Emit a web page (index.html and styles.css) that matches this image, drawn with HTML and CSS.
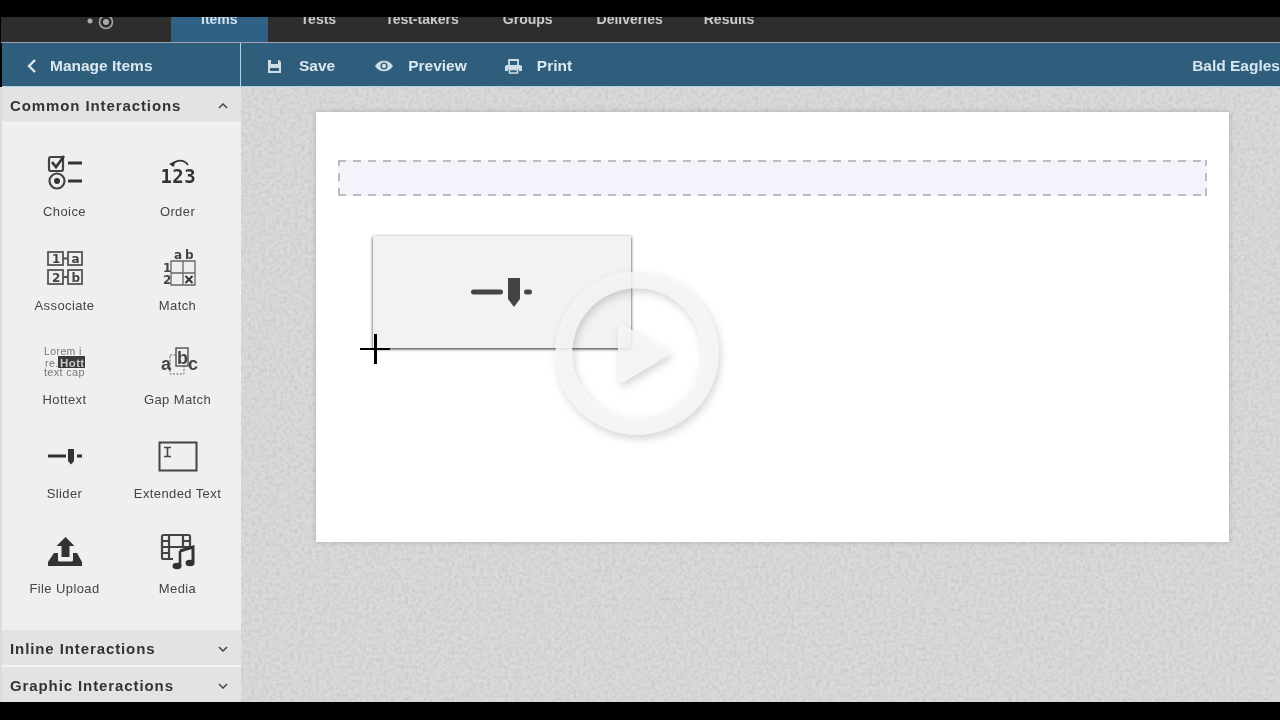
FILE: index.html
```html
<!DOCTYPE html>
<html lang="en">
<head>
    <meta charset="UTF-8">
    <title>Item authoring</title>
    <link rel="stylesheet" href="styles.css">
</head>
<body>
    <div class="screen">
        <nav class="nav">
            <div class="logo">
                <svg width="30" height="20" viewBox="0 0 30 20"><circle cx="5" cy="4" r="2.5" fill="#aaa"/><circle cx="21" cy="5" r="6.5" fill="none" stroke="#aaa" stroke-width="1.6"/><circle cx="21" cy="5" r="3" fill="#aaa"/></svg>
            </div>
            <a class="nav-item active">Items</a>
            <a class="nav-item tests">Tests</a>
            <a class="nav-item">Test-takers</a>
            <a class="nav-item">Groups</a>
            <a class="nav-item">Deliveries</a>
            <a class="nav-item results">Results</a>
        </nav>

        <header class="toolbar">
            <div class="back">
                <svg width="12" height="16" viewBox="0 0 12 16"><path d="M9 2 3 8l6 6" fill="none" stroke="#dbe8f0" stroke-width="2.4"/></svg>
                <span>Manage Items</span>
            </div>
            <div class="tool save">
                <svg width="15" height="15" viewBox="0 0 15 15"><path d="M1 1h11l2 2v11H1z" fill="#cfdde6"/><path d="M4 1h7v4H4zM3 9h9v3H3z" fill="#2f5f7f"/></svg>
                <span>Save</span>
            </div>
            <div class="tool preview">
                <svg width="18" height="12" viewBox="0 0 18 12"><path d="M0 6c4-7 14-7 18 0-4 7-14 7-18 0z" fill="#cfdde6"/><circle cx="9" cy="6" r="3.6" fill="#2f5f7f"/><circle cx="9" cy="6" r="2.2" fill="#cfdde6"/></svg>
                <span>Preview</span>
            </div>
            <div class="tool print">
                <svg width="17" height="15" viewBox="0 0 17 15"><path d="M4 6V1h9v5" fill="none" stroke="#cfdde6" stroke-width="1.8"/><path d="M2 6h13a2 2 0 0 1 2 2v4h-3v-2H3v2H0V8a2 2 0 0 1 2-2z" fill="#cfdde6"/><path d="M4.5 10.5h8V14h-8z" fill="none" stroke="#cfdde6" stroke-width="1.6"/></svg>
                <span>Print</span>
            </div>
            <div class="team">Bald Eagles</div>
        </header>

        <div class="main">
            <aside class="sidebar">
                <div class="acc-head">
                    <span>Common Interactions</span>
                    <svg class="chev" width="10" height="6" viewBox="0 0 10 6"><path d="M1 5l4-4 4 4" fill="none" stroke="#444" stroke-width="1.5"/></svg>
                </div>
                <div class="tiles">
                    <div class="tile">
                        <svg width="40" height="40" viewBox="0 0 40 40">
                            <rect x="4" y="3" width="14" height="14" rx="2" fill="none" stroke="#444" stroke-width="2.2"/>
                            <path d="M7 8l4 5 8-11" fill="none" stroke="#333" stroke-width="2.6"/>
                            <path d="M23 9h14M23 27h14" stroke="#333" stroke-width="3"/>
                            <circle cx="12" cy="27" r="7.5" fill="none" stroke="#444" stroke-width="2.2"/>
                            <circle cx="12" cy="27" r="3" fill="#333"/>
                        </svg>
                        <span>Choice</span>
                    </div>
                    <div class="tile">
                        <svg width="40" height="40" viewBox="0 0 40 40">
                            <path d="M14 12c3-7 12-7 16-1" fill="none" stroke="#333" stroke-width="1.6"/>
                            <path d="M11 10l6-3-1 6z" fill="#333"/>
                            <text x="2.500" y="28.500" class="ico-num">123</text>
                        </svg>
                        <span>Order</span>
                    </div>
                    <div class="tile">
                        <svg width="40" height="40" viewBox="0 0 40 40">
                            <g fill="none" stroke="#555" stroke-width="1.800">
                                <rect x="3" y="4" width="15" height="13"/>
                                <rect x="23" y="4" width="14" height="13"/>
                                <rect x="3" y="22" width="15" height="14"/>
                                <rect x="23" y="22" width="14" height="14"/>
                                <path d="M18 10.500h5M18 29h5"/>
                            </g>
                            <text x="7" y="15" class="ico-sm">1</text>
                            <text x="26.500" y="14.500" class="ico-sm">a</text>
                            <text x="7" y="33.500" class="ico-sm">2</text>
                            <text x="26.500" y="33.500" class="ico-sm">b</text>
                        </svg>
                        <span>Associate</span>
                    </div>
                    <div class="tile">
                        <svg width="40" height="40" viewBox="0 0 40 40">
                            <path d="M13 13h24v24H13zM25 13v24M13 25h24" fill="none" stroke="#666" stroke-width="1.300"/>
                            <text x="16" y="11" class="ico-sm">a</text>
                            <text x="27" y="11" class="ico-sm">b</text>
                            <text x="5" y="23.500" class="ico-sm">1</text>
                            <text x="5" y="36" class="ico-sm">2</text>
                            <path d="M27.500 28l7 7m0-7-7 7" stroke="#333" stroke-width="2"/>
                        </svg>
                        <span>Match</span>
                    </div>
                    <div class="tile">
                        <svg width="40" height="40" viewBox="0 0 40 40">
                            <text x="-1" y="12" class="ico-lorem">Lorem i</text>
                            <text x="0" y="24" class="ico-lorem">re.</text>
                            <rect x="13" y="13" width="27" height="12" fill="#3a3a3a"/>
                            <text x="15" y="23.500" class="ico-hot">Hott</text>
                            <text x="-1" y="32.500" class="ico-lorem wide">text cap</text>
                        </svg>
                        <span>Hottext</span>
                    </div>
                    <div class="tile">
                        <svg width="40" height="40" viewBox="0 0 40 40">
                            <rect x="12" y="12" width="14" height="19" fill="none" stroke="#666" stroke-width="1" stroke-dasharray="2 1.500"/>
                            <rect x="18" y="5" width="12" height="18" fill="#efefef" stroke="#444" stroke-width="1.300"/>
                            <text x="3" y="27" class="ico-gap">a</text>
                            <text x="19" y="20.500" class="ico-gap">b</text>
                            <text x="30" y="27" class="ico-gap">c</text>
                        </svg>
                        <span>Gap Match</span>
                    </div>
                    <div class="tile">
                        <svg width="40" height="40" viewBox="0 0 40 40">
                            <path d="M3 19h18M32 19h5" stroke="#333" stroke-width="3"/>
                            <path d="M23 12h6v12l-3 3.500-3-3.500z" fill="#333"/>
                        </svg>
                        <span>Slider</span>
                    </div>
                    <div class="tile">
                        <svg width="40" height="40" viewBox="0 0 40 40">
                            <rect x="1.500" y="5.500" width="37" height="28" fill="none" stroke="#444" stroke-width="2"/>
                            <path d="M6 10.500h7M6 19.500h7M9.500 10.500v9" fill="none" stroke="#444" stroke-width="1.600"/>
                        </svg>
                        <span>Extended Text</span>
                    </div>
                    <div class="tile">
                        <svg width="40" height="40" viewBox="0 0 40 40">
                            <path d="M20.500 6l9 9h-5v11h-8V15h-5z" fill="#333"/>
                            <path d="M9 22h4v7a1.500 1.500 0 0 0 1.500 1.500h12A1.500 1.500 0 0 0 28 29v-7h4l5 9v4H3v-4z" fill="#333"/>
                        </svg>
                        <span>File Upload</span>
                    </div>
                    <div class="tile">
                        <svg width="40" height="40" viewBox="0 0 40 40">
                            <rect x="4" y="4" width="28" height="24" rx="1.500" fill="none" stroke="#444" stroke-width="2.200"/>
                            <path d="M11 4v24M25 4v12M4 10h7M4 16h28M4 22h7M25 10h7" stroke="#444" stroke-width="2.200"/>
                            <path d="M17 17h19v14h-7v6H15V24h2z" fill="#efefef"/>
                            <path d="M22 20l13-4v15" fill="none" stroke="#333" stroke-width="3"/>
                            <path d="M22 20v15" stroke="#333" stroke-width="2.600"/>
                            <ellipse cx="19" cy="35" rx="4.500" ry="3.300" fill="#333"/>
                            <ellipse cx="32" cy="32" rx="4.500" ry="3.300" fill="#333"/>
                        </svg>
                        <span>Media</span>
                    </div>
                </div>
                <div class="acc-head">
                    <span>Inline Interactions</span>
                    <svg class="chev" width="10" height="6" viewBox="0 0 10 6"><path d="M1 1l4 4 4-4" fill="none" stroke="#444" stroke-width="1.5"/></svg>
                </div>
                <div class="acc-head last">
                    <span>Graphic Interactions</span>
                    <svg class="chev" width="10" height="6" viewBox="0 0 10 6"><path d="M1 1l4 4 4-4" fill="none" stroke="#444" stroke-width="1.5"/></svg>
                </div>
            </aside>

            <section class="canvas">
                <svg class="grain" width="1040" height="615">
                    <filter id="noise"><feTurbulence type="fractalNoise" baseFrequency="0.28" numOctaves="3" seed="4"/><feColorMatrix values="0 0 0 0 0.45 0 0 0 0 0.45 0 0 0 0 0.45 1.600 0 0 0 -0.6"/></filter>
                    <rect width="1040" height="615" filter="url(#noise)" opacity="0.55"/>
                </svg>
                <div class="paper">
                    <div class="drop-row"></div>
                    <div class="block">
                        <svg width="64" height="32" viewBox="0 0 64 32"><path d="M3.500 16h27M56.500 16h3" stroke="#444" stroke-width="5" stroke-linecap="round"/><path d="M38 2h12v21l-6 8-6-8z" fill="#444"/></svg>
                    </div>
                </div>
            </section>
        </div>

        <svg class="cross" width="30" height="30" viewBox="0 0 30 30"><path d="M0 15h30" stroke="#000" stroke-width="2"/><path d="M15.500 0v30" stroke="#000" stroke-width="3"/></svg>

        <svg class="play" width="200" height="200" viewBox="0 0 200 200">
            <filter id="shade" x="-20%" y="-20%" width="140%" height="140%"><feDropShadow dx="2" dy="4" stdDeviation="4" flood-color="#000" flood-opacity="0.2"/></filter>
            <g filter="url(#shade)" fill="#f6f6f6" fill-opacity="0.85">
                <path fill-rule="evenodd" d="M100 18.500a81.500 81.500 0 1 0 0 163 81.500 81.500 0 0 0 0-163zm0 16.500a65 65 0 1 1 0 130 65 65 0 0 1 0-130z"/>
                <path d="M81 75c0-3 2-4 5-3l44 25c3 2 3 4 0 6l-44 26c-3 1-5 0-5-3z"/>
            </g>
        </svg>
    </div>
</body>
</html>
```

FILE: styles.css
```css
* {
  box-sizing: border-box;
}

body {
  margin: 0;
  background-color: #000;
  font-family: "Liberation Sans", Arial, sans-serif;
}

/* the reference is a video frame so everything is a bit soft */
.screen {
  position: relative;
  width: 1280px;
  height: 720px;
  padding: 17px 0 18px;
  overflow: hidden;
  background-color: #000;
  filter: blur(0.4px);
}

/* top nav, its upper half is cut off by the black band */
.nav {
  display: flex;
  align-items: flex-end;
  height: 26px;
  margin-left: 1px;
  overflow: hidden;
  background-color: #2e2d2d;
  border-bottom: 1px solid #a3a1b4;
}

.logo {
  flex: none;
  align-self: flex-start;
  width: 170px;
  padding-left: 84px;
}

.nav-item {
  flex: none;
  height: 25px;
  padding: 0 22px;
  color: #c9c9c9;
  font-size: 14px;
  font-weight: bold;
  line-height: 4px;
}

.nav-item.active {
  padding: 0 30px;
  margin-right: 9px;
  color: #cfe0ec;
  background-color: #2f6186;
}

.nav-item.tests {
  margin-left: 2px;
  margin-right: 5px;
}

.nav-item.results {
  margin-left: -3px;
}

.toolbar {
  display: flex;
  align-items: center;
  height: 44px;
  padding-top: 3px;
  margin-left: 2px;
  color: #dbe8f0;
  font-size: 15.500px;
  font-weight: bold;
  background-color: #2f5e7d;
  border-bottom: 1px solid #a9d4ea;
}

.back {
  display: flex;
  flex: none;
  align-items: center;
  gap: 12px;
  width: 239px;
  height: calc(100% + 3px);
  padding-top: 3px;
  padding-left: 24px;
  margin-top: -3px;
  border-right: 1px solid #a9d4ea;
}

.tool {
  display: flex;
  align-items: center;
}

.save {
  gap: 17px;
  margin-left: 26px;
}

.preview {
  gap: 15px;
  margin-left: 40px;
}

.print {
  gap: 15px;
  margin-left: 38px;
}

.team {
  margin-left: auto;
  color: #d5e6f1;
}

.main {
  display: flex;
  height: 615px;
}

.sidebar {
  display: flex;
  flex: none;
  flex-direction: column;
  width: 241px;
  background-color: #efefef;
  border-left: 2px solid #dcdcdc;
}

.acc-head {
  display: flex;
  flex: none;
  align-items: center;
  justify-content: space-between;
  height: 37px;
  padding: 2px 13px 0 8px;
  color: #333;
  font-size: 15px;
  font-weight: bold;
  letter-spacing: 0.9px;
  background-color: #e3e3e3;
  border-bottom: 2px solid #f3f3f3;
}

.acc-head.last {
  height: 35px;
  border-bottom: 0;
}

.tiles {
  display: grid;
  flex: 1;
  grid-template-columns: 113px 113px;
  grid-auto-rows: 94.250px;
  align-content: start;
  padding-top: 31px;
  padding-left: 6px;
  margin-top: -1px;
}

.tile {
  display: flex;
  flex-direction: column;
  align-items: center;
  gap: 9.500px;
  color: #444;
  font-size: 13px;
  letter-spacing: 0.4px;
}

.tile svg {
  overflow: visible;
}

.ico-num {
  font-family: "DejaVu Sans Mono", monospace;
  font-size: 19px;
  font-weight: bold;
  fill: #333;
}

.ico-sm {
  font-family: "DejaVu Sans", sans-serif;
  font-size: 12px;
  font-weight: bold;
  fill: #444;
}

.ico-lorem {
  font-size: 10.500px;
  fill: #777;
}

.ico-lorem.wide {
  font-size: 11px;
  letter-spacing: 0.3px;
}

.ico-hot {
  font-size: 11.500px;
  font-weight: bold;
  fill: #c8c8c8;
}

.ico-gap {
  font-size: 18px;
  font-weight: bold;
  fill: #444;
}

.canvas {
  position: relative;
  flex: 1;
  padding: 25px 51px 0 75px;
  background-color: #dadada;
}

.grain {
  position: absolute;
  top: 0;
  left: 0;
}

.paper {
  position: relative;
  height: 430px;
  padding: 48px 22px 0;
  background-color: #fff;
  box-shadow: 0 0 5px rgba(0, 0, 0, 0.2);
}

.drop-row {
  height: 36px;
  background-color: #f2f3fb;
  background-image:
    repeating-linear-gradient(90deg, #bdbdbd 0 8px, transparent 8px 15px),
    repeating-linear-gradient(90deg, #bdbdbd 0 8px, transparent 8px 15px),
    repeating-linear-gradient(0deg, #bdbdbd 0 8px, transparent 8px 15px),
    repeating-linear-gradient(0deg, #bdbdbd 0 8px, transparent 8px 15px);
  background-repeat: no-repeat;
  background-position: top left, bottom left, top left, top right;
  background-size: 100% 2px, 100% 2px, 2px 100%, 2px 100%;
}

.block {
  display: flex;
  align-items: center;
  justify-content: center;
  width: 258px;
  height: 112px;
  margin: 40px 0 0 35px;
  background-color: #f2f2f2;
  box-shadow: 0 1px 3px rgba(0, 0, 0, 0.85);
}

.cross {
  position: absolute;
  top: 334px;
  left: 360px;
}

.play {
  position: absolute;
  top: 253px;
  left: 537px;
}
```
